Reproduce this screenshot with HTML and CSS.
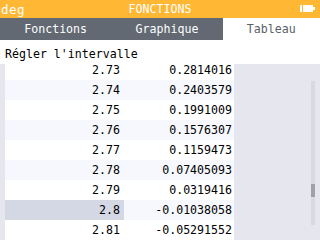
FILE: index.html
```html
<!DOCTYPE html>
<html>

<head>
    <title>Fonctions - Tableau</title>
    <link rel="stylesheet" href="styles.css">
</head>

<body>
    <div class="screen">
        <div class="titleBar">
            <span class="angleUnit">deg</span>
            <span class="appTitle">FONCTIONS</span>
            <svg class="battery" width="16" height="18" viewBox="0 0 16 18">
                <rect x="0" y="5" width="2" height="7" fill="#fff" />
                <rect x="3" y="5" width="10" height="7" fill="#fff" />
                <rect x="13" y="7" width="2" height="3" fill="#fff" />
            </svg>
        </div>
        <div class="tabBar">
            <div class="tab">Fonctions</div>
            <div class="tab">Graphique</div>
            <div class="tab tabActive">Tableau</div>
        </div>
        <div class="intervalButton">Régler l'intervalle</div>
        <div class="tableArea">
            <div class="valuesTable">
                <div class="row"><div class="cell">2.73</div><div class="cell valueCell">0.2814016</div></div>
                <div class="row rowOdd"><div class="cell">2.74</div><div class="cell valueCell">0.2403579</div></div>
                <div class="row"><div class="cell">2.75</div><div class="cell valueCell">0.1991009</div></div>
                <div class="row rowOdd"><div class="cell">2.76</div><div class="cell valueCell">0.1576307</div></div>
                <div class="row"><div class="cell">2.77</div><div class="cell valueCell">0.1159473</div></div>
                <div class="row rowOdd"><div class="cell">2.78</div><div class="cell valueCell">0.07405093</div></div>
                <div class="row"><div class="cell">2.79</div><div class="cell valueCell">0.0319416</div></div>
                <div class="row rowOdd"><div class="cell cellSelected">2.8</div><div class="cell valueCell">-0.01038058</div></div>
                <div class="row"><div class="cell">2.81</div><div class="cell valueCell">-0.05291552</div></div>
            </div>
            <div class="scrollTrack">
                <div class="scrollThumb"></div>
            </div>
        </div>
    </div>
</body>

</html>
```

FILE: styles.css
```css
body {
    margin: 0;
    font-family: "DejaVu Sans Mono", monospace;
    font-size: 11.6px;
}

.screen {
    width: 320px;
    height: 240px;
    overflow: hidden;
    display: flex;
    flex-direction: column;
}

.titleBar {
    height: 18px;
    flex: none;
    background-color: #ffb734;
    color: #fff;
    display: flex;
    align-items: center;
    justify-content: space-between;
    padding: 0 4px 0 1px;
    position: relative;
}

.angleUnit {
    font-size: 12.5px;
    letter-spacing: 0.5px;
}

.appTitle {
    position: absolute;
    left: 0;
    right: 0;
    text-align: center;
}

.battery {
    display: block;
}

.tabBar {
    height: 22px;
    flex: none;
    background-color: #626973;
    display: flex;
}

.tab {
    flex: 1 1 auto;
    padding: 0 24px;
    color: #fff;
    display: flex;
    align-items: center;
    justify-content: center;
}

.tabActive {
    background-color: #fff;
    color: #5a6069;
}

.intervalButton {
    height: 24px;
    flex: none;
    box-sizing: border-box;
    background-color: #fff;
    display: flex;
    align-items: center;
    padding: 3px 0 0 5px;
    position: relative;
    z-index: 1;
}

.tableArea {
    flex: 1;
    background-color: #e6e6ee;
    padding-left: 5px;
    position: relative;
}

.valuesTable {
    width: 229px;
    margin-top: -4px;
}

.row {
    height: 20px;
    display: flex;
    background-color: #fff;
}

.rowOdd {
    background-color: #f6f8fe;
}

.cell {
    width: 117px;
    padding-right: 4px;
    display: flex;
    align-items: center;
    justify-content: flex-end;
}

.valueCell {
    width: 110px;
    padding-right: 2px;
}

.cellSelected {
    background-color: #d4d7e4;
}

.scrollTrack {
    position: absolute;
    left: 311px;
    top: 17px;
    width: 4px;
    height: 144px;
    background-color: #d9d9e2;
}

.scrollThumb {
    margin-top: 103px;
    height: 13px;
    background-color: #a1a1a9;
}
```
